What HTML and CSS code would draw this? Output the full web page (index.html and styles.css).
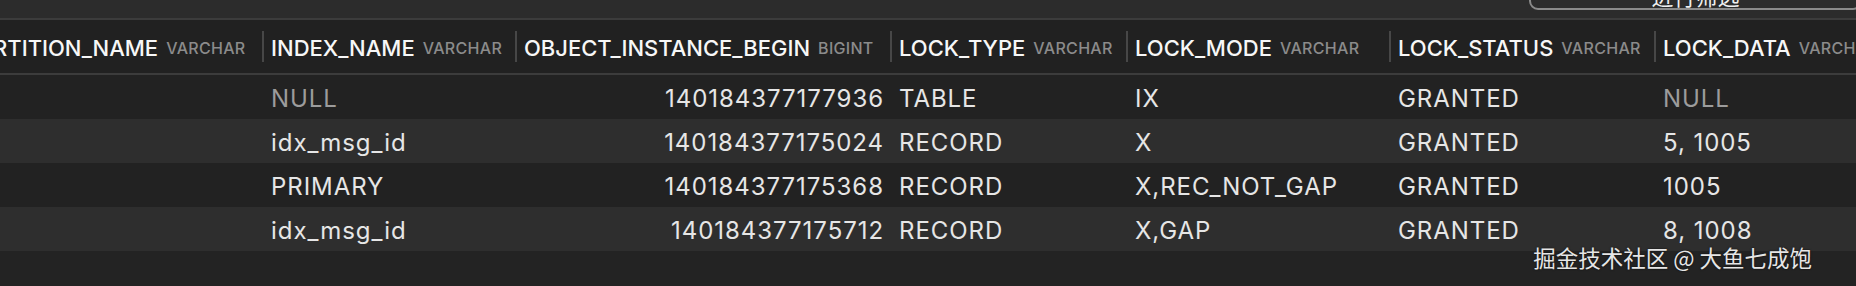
FILE: index.html
```html
<!DOCTYPE html>
<html lang="zh">
<head>
<meta charset="utf-8">
<title>data_locks</title>
<link rel="stylesheet" href="styles.css">
</head>
<body>
<div class="page">
  <div class="toolbar">
    <button class="btn">进行筛选</button>
  </div>
  <div class="table-wrap">
    <div class="table">
      <div class="row head">
        <div class="hc"><span class="name">PARTITION_NAME</span><span class="type">VARCHAR</span></div>
        <div class="hc"><span class="name">INDEX_NAME</span><span class="type">VARCHAR</span></div>
        <div class="hc"><span class="name">OBJECT_INSTANCE_BEGIN</span><span class="type">BIGINT</span></div>
        <div class="hc"><span class="name">LOCK_TYPE</span><span class="type">VARCHAR</span></div>
        <div class="hc"><span class="name">LOCK_MODE</span><span class="type">VARCHAR</span></div>
        <div class="hc"><span class="name">LOCK_STATUS</span><span class="type">VARCHAR</span></div>
        <div class="hc"><span class="name">LOCK_DATA</span><span class="type">VARCHAR</span></div>
      </div>
      <div class="row odd">
        <div class="c"></div>
        <div class="c null">NULL</div>
        <div class="c num">140184377177936</div>
        <div class="c">TABLE</div>
        <div class="c">IX</div>
        <div class="c">GRANTED</div>
        <div class="c null">NULL</div>
      </div>
      <div class="row even">
        <div class="c"></div>
        <div class="c">idx_msg_id</div>
        <div class="c num">140184377175024</div>
        <div class="c">RECORD</div>
        <div class="c">X</div>
        <div class="c">GRANTED</div>
        <div class="c">5, 1005</div>
      </div>
      <div class="row odd">
        <div class="c"></div>
        <div class="c">PRIMARY</div>
        <div class="c num">140184377175368</div>
        <div class="c">RECORD</div>
        <div class="c">X,REC_NOT_GAP</div>
        <div class="c">GRANTED</div>
        <div class="c">1005</div>
      </div>
      <div class="row even">
        <div class="c"></div>
        <div class="c">idx_msg_id</div>
        <div class="c num">140184377175712</div>
        <div class="c">RECORD</div>
        <div class="c">X,GAP</div>
        <div class="c">GRANTED</div>
        <div class="c">8, 1008</div>
      </div>
    </div>
  </div>
  <div class="watermark">掘金技术社区 @ 大鱼七成饱</div>
</div>
</body>
</html>
```

FILE: styles.css
```css
* { box-sizing: border-box; }

html, body {
  margin: 0;
  padding: 0;
  background: #232323;
  font-family: Inter, "Noto Sans", "Noto Sans CJK SC", sans-serif;
  color: #e4e4e4;
}

.page {
  position: relative;
  width: 1856px;
  height: 286px;
  overflow: hidden;
  background: #232323;
}

.toolbar {
  height: 20px;
  background: #2c2c2c;
  border-bottom: 2px solid #3c3c3c;
  display: flex;
  justify-content: flex-end;
}

.btn {
  margin-top: -32px;
  margin-right: -6px;
  width: 333px;
  height: 42px;
  border: 2px solid #8a8a8a;
  border-radius: 9px;
  background: #2c2c2c;
  color: #f0f0f0;
  font-family: "Noto Sans CJK SC", sans-serif;
  font-size: 22px;
  line-height: 1;
  padding: 0 0 2px 0;
  display: flex;
  align-items: flex-end;
  justify-content: center;
}

.table-wrap {
  overflow: hidden;
}

.table {
  margin-left: -44px;
  width: 1960px;
}

.row {
  display: grid;
  grid-template-columns: 306px 253px 375px 236px 263px 265px 300px;
}

.head {
  height: 55px;
  background: #212121;
  border-bottom: 2px solid #3c3c3c;
}

.hc {
  display: flex;
  align-items: center;
  white-space: nowrap;
  overflow: hidden;
  padding-top: 3px;
}

.hc::before {
  content: "";
  flex: none;
  width: 2px;
  height: 31px;
  margin-right: 7px;
  background: #474747;
  margin-top: -3px;
}

.name {
  font-size: 22px;
  font-weight: 500;
  color: #f7f7f7;
  letter-spacing: 0;
}

.type {
  margin-left: 8px;
  font-size: 16px;
  font-weight: 500;
  color: #8b8b8b;
  letter-spacing: 0.3px;
}

.odd { height: 44px; background: #222222; }
.even { height: 44px; background: #2e2e2e; }

.c {
  display: flex;
  align-items: center;
  padding: 2px 8px 0 9px;
  font-size: 24px;
  letter-spacing: 0.95px;
  color: #e6e6e6;
  white-space: nowrap;
  overflow: hidden;
}

.c.num { justify-content: flex-end; padding-right: 6px; }
.c.null { color: #9c9c9c; }

.watermark {
  position: absolute;
  right: 44px;
  top: 241px;
  font-family: "Noto Sans CJK SC", sans-serif;
  font-size: 22.5px;
  color: #e6e6e6;
  text-shadow: 0 0 2px rgba(0, 0, 0, 0.8);
  white-space: nowrap;
}
```
